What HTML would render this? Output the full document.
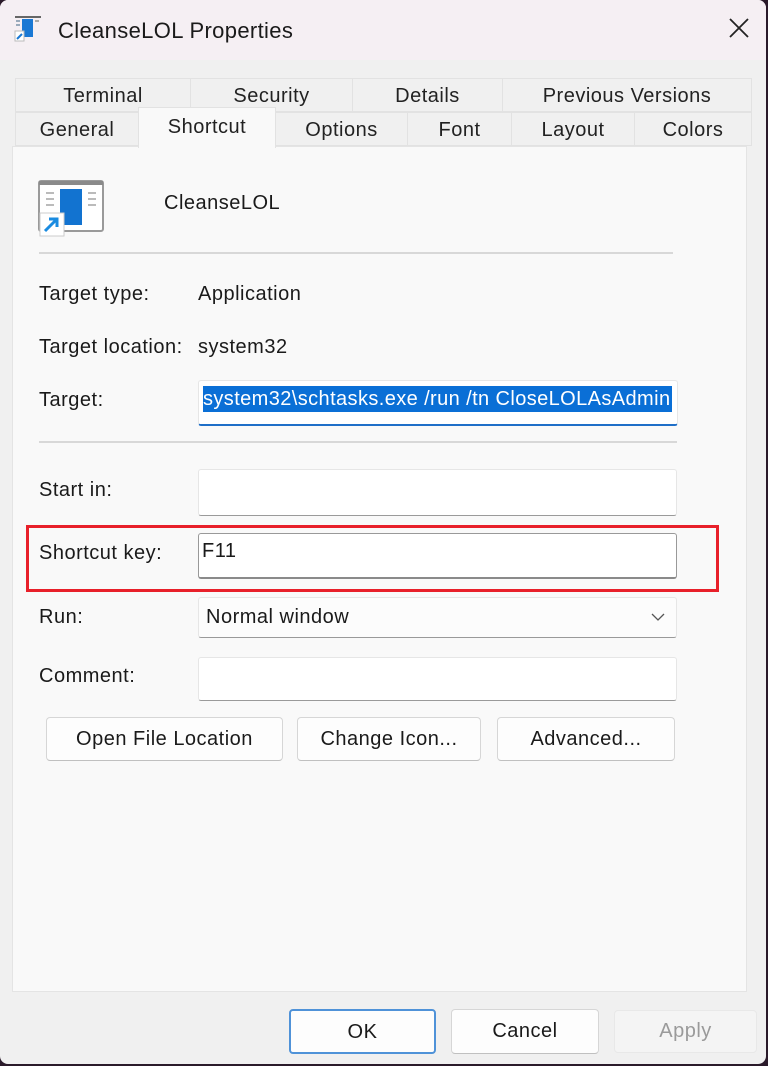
<!DOCTYPE html>
<html><head><meta charset="utf-8"><style>
*{box-sizing:border-box;margin:0;padding:0}
body{width:768px;height:1066px;background:#2a1a2a;font-family:"Liberation Sans",sans-serif;color:#1a1a1a;overflow:hidden;position:relative}
.win{position:absolute;left:0;top:0;width:766px;height:1064px;background:#f0f0f0;border-radius:8px;overflow:hidden}
.title{position:absolute;left:0;top:0;width:100%;height:60px;background:#f5eff3}
.a{position:absolute;white-space:nowrap;font-size:20px;letter-spacing:0.5px}
.tab{position:absolute;height:34px;border:1px solid #e2e2e2;background:#f0f0f0;text-align:center;font-size:20px;line-height:34px;letter-spacing:0.5px;color:#222}
.panel{position:absolute;left:12px;top:146px;width:735px;height:846px;background:#f9f9f9;border:1px solid #e4e4e4}
.box{position:absolute;background:#fff;border:1px solid #e6e6e6;border-bottom:1px solid #9a9a9a;border-radius:3px}
.btn{position:absolute;background:#fdfdfd;border:1px solid #d6d6d6;border-bottom-color:#c0c0c0;border-radius:4px;text-align:center;font-size:20px;letter-spacing:0.5px;color:#1a1a1a}
.hr{position:absolute;left:39px;width:638px;height:2px;background:#d8d8d8}
</style></head><body>
<div class="win">
<div class="title"></div>
<svg style="position:absolute;left:13px;top:16px" width="32" height="28" viewBox="0 0 32 28"><rect x="2" y="0" width="26" height="2" fill="#666"/><rect x="3" y="4" width="4" height="2" fill="#9ab"/><rect x="3" y="8" width="4" height="2" fill="#9ab"/><rect x="22" y="4" width="4" height="2" fill="#aaa"/><rect x="9" y="3" width="11" height="18" fill="#1a78d4"/><rect x="2" y="15" width="9" height="10" fill="#fff" stroke="#bbb"/><path d="M4 23 L9 18" stroke="#1a78d4" stroke-width="2"/></svg>
<div class="a" style="left:58px;top:18px;font-size:22px;letter-spacing:0.35px">CleanseLOL Properties</div>
<svg style="position:absolute;left:729px;top:18px" width="20" height="20"><path d="M1 1L19 19M19 1L1 19" stroke="#222" stroke-width="1.8"/></svg>

<div class="tab" style="left:15px;top:78px;width:176px">Terminal</div>
<div class="tab" style="left:190px;top:78px;width:163px">Security</div>
<div class="tab" style="left:352px;top:78px;width:151px">Details</div>
<div class="tab" style="left:502px;top:78px;width:250px">Previous Versions</div>
<div class="tab" style="left:15px;top:112px;width:124px">General</div>
<div class="tab" style="left:275px;top:112px;width:133px">Options</div>
<div class="tab" style="left:407px;top:112px;width:105px">Font</div>
<div class="tab" style="left:511px;top:112px;width:124px">Layout</div>
<div class="tab" style="left:634px;top:112px;width:118px">Colors</div>
<div class="panel"></div>
<div class="tab" style="left:138px;top:107px;width:138px;height:41px;background:#f9f9f9;border-bottom:none;line-height:38px">Shortcut</div>

<svg style="position:absolute;left:38px;top:180px" width="68" height="58" viewBox="0 0 68 58"><rect x="1" y="1" width="64" height="50" rx="2" fill="#fff" stroke="#9a9a9a" stroke-width="2"/><rect x="1" y="1" width="64" height="4" fill="#8a8a8a"/><g fill="#bbb"><rect x="8" y="12" width="8" height="2"/><rect x="8" y="18" width="8" height="2"/><rect x="8" y="24" width="8" height="2"/><rect x="50" y="12" width="8" height="2"/><rect x="50" y="18" width="8" height="2"/><rect x="50" y="24" width="8" height="2"/></g><rect x="22" y="9" width="22" height="36" fill="#1273d0"/><rect x="2" y="33" width="24" height="23" fill="#fff" stroke="#ccc"/><path d="M7 51L19 39M11 39H19V47" stroke="#1a8be0" stroke-width="3" fill="none"/></svg>
<div class="a" style="left:164px;top:192px">CleanseLOL</div>
<div class="hr" style="top:252px;width:634px"></div>

<div class="a" style="left:39px;top:283px">Target type:</div>
<div class="a" style="left:198px;top:283px">Application</div>
<div class="a" style="left:39px;top:336px">Target location:</div>
<div class="a" style="left:198px;top:336px">system32</div>
<div class="a" style="left:39px;top:389px">Target:</div>
<div class="box" style="left:198px;top:380px;width:480px;height:46px;border-bottom:2px solid #1f6fc8"></div>
<div class="a" style="left:203px;top:386px;height:26px;width:469px;background:#0a6fd6;color:#fff;line-height:26px;overflow:hidden;letter-spacing:0.4px">system32\schtasks.exe /run /tn CloseLOLAsAdmin</div>
<div class="hr" style="top:441px"></div>

<div class="a" style="left:39px;top:479px">Start in:</div>
<div class="box" style="left:198px;top:469px;width:479px;height:47px"></div>
<div class="a" style="left:39px;top:542px">Shortcut key:</div>
<div class="box" style="left:198px;top:533px;width:479px;height:46px;border:1px solid #999;border-bottom:2px solid #8a8a8a"></div>
<div class="a" style="left:202px;top:540px">F11</div>
<div style="position:absolute;left:26px;top:525px;width:693px;height:67px;border:3px solid #e8202a"></div>
<div class="a" style="left:39px;top:606px">Run:</div>
<div class="box" style="left:198px;top:597px;width:479px;height:41px;background:#fcfcfc"></div>
<div class="a" style="left:206px;top:606px">Normal window</div>
<svg style="position:absolute;left:651px;top:612px" width="14" height="10"><path d="M1 2L7 8L13 2" stroke="#555" stroke-width="1.3" fill="none"/></svg>
<div class="a" style="left:39px;top:665px">Comment:</div>
<div class="box" style="left:198px;top:657px;width:479px;height:44px"></div>

<div class="btn" style="left:46px;top:717px;width:237px;height:44px;line-height:42px">Open File Location</div>
<div class="btn" style="left:297px;top:717px;width:184px;height:44px;line-height:42px">Change Icon...</div>
<div class="btn" style="left:497px;top:717px;width:178px;height:44px;line-height:42px">Advanced...</div>

<div class="btn" style="left:289px;top:1009px;width:147px;height:45px;line-height:43px;border:2px solid #4f92d8">OK</div>
<div class="btn" style="left:451px;top:1009px;width:148px;height:45px;line-height:43px">Cancel</div>
<div class="btn" style="left:614px;top:1010px;width:143px;height:43px;line-height:41px;background:#f4f4f4;border-color:#e8e8e8;color:#9a9a9a">Apply</div>
</div>
</body></html>
